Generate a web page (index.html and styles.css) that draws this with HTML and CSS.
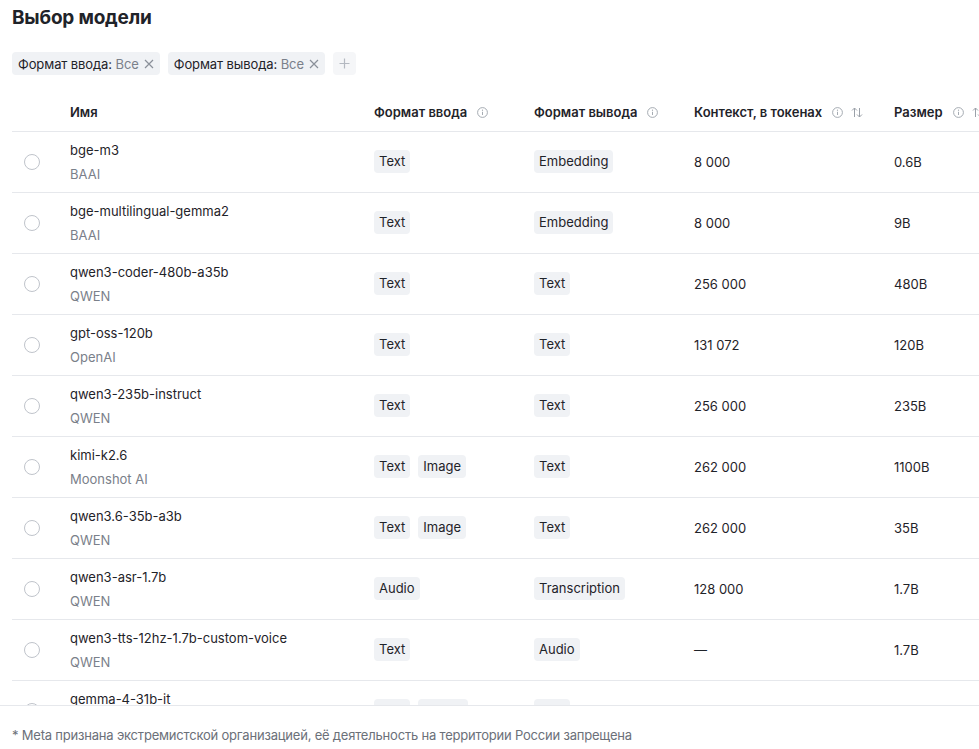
FILE: index.html
```html
<!DOCTYPE html>
<html lang="ru">
<head>
	<meta charset="utf-8">
	<title>Выбор модели</title>
	<link rel="stylesheet" href="styles.css">
</head>
<body>
	<div class="page">
		<h1 class="title">Выбор модели</h1>

		<!-- Filters -->
		<div class="filters">
			<span class="chip">Формат ввода: <span class="chip-value">Все</span>
				<svg class="chip-close" width="10" height="10" viewBox="0 0 10 10"><path d="M1 1L9 9M9 1L1 9" /></svg>
			</span>
			<span class="chip">Формат вывода: <span class="chip-value">Все</span>
				<svg class="chip-close" width="10" height="10" viewBox="0 0 10 10"><path d="M1 1L9 9M9 1L1 9" /></svg>
			</span>
			<button class="chip-add" type="button">
				<svg width="11" height="11" viewBox="0 0 11 11"><path d="M5.5 0.5V10.5M0.5 5.5H10.5" /></svg>
			</button>
		</div>

		<!-- Model table -->
		<div class="table-wrap">
			<table class="models">
				<colgroup>
					<col class="col-radio">
					<col class="col-name">
					<col class="col-in">
					<col class="col-out">
					<col class="col-ctx">
					<col class="col-size">
				</colgroup>
				<thead>
					<tr>
						<th></th>
						<th>Имя</th>
						<th><span class="th">Формат ввода <svg class="info" width="11" height="11" viewBox="0 0 11 11"><circle cx="5.5" cy="5.5" r="4.9" /><path d="M5.5 4.8V8" /><circle class="dot" cx="5.5" cy="3.2" r="0.6" /></svg></span></th>
						<th><span class="th">Формат вывода <svg class="info" width="11" height="11" viewBox="0 0 11 11"><circle cx="5.5" cy="5.5" r="4.9" /><path d="M5.5 4.8V8" /><circle class="dot" cx="5.5" cy="3.2" r="0.6" /></svg></span></th>
						<th><span class="th">Контекст, в токенах <svg class="info" width="11" height="11" viewBox="0 0 11 11"><circle cx="5.5" cy="5.5" r="4.9" /><path d="M5.5 4.8V8" /><circle class="dot" cx="5.5" cy="3.2" r="0.6" /></svg>
							<svg class="sort" width="12" height="11" viewBox="0 0 12 11"><path d="M3.5 10V1M1 3.5L3.5 1L6 3.5M8.5 1V10M6 7.5L8.5 10L11 7.5" /></svg></span></th>
						<th><span class="th">Размер <svg class="info" width="11" height="11" viewBox="0 0 11 11"><circle cx="5.5" cy="5.5" r="4.9" /><path d="M5.5 4.8V8" /><circle class="dot" cx="5.5" cy="3.2" r="0.6" /></svg>
							<svg class="sort" width="12" height="11" viewBox="0 0 12 11"><path d="M3.5 10V1M1 3.5L3.5 1L6 3.5M8.5 1V10M6 7.5L8.5 10L11 7.5" /></svg></span></th>
					</tr>
				</thead>
				<tbody>
					<tr>
						<td><span class="radio"></span></td>
						<td><div class="name">bge-m3</div><div class="vendor">BAAI</div></td>
						<td><span class="tag">Text</span></td>
						<td><span class="tag">Embedding</span></td>
						<td>8 000</td>
						<td>0.6B</td>
					</tr>
					<tr>
						<td><span class="radio"></span></td>
						<td><div class="name">bge-multilingual-gemma2</div><div class="vendor">BAAI</div></td>
						<td><span class="tag">Text</span></td>
						<td><span class="tag">Embedding</span></td>
						<td>8 000</td>
						<td>9B</td>
					</tr>
					<tr>
						<td><span class="radio"></span></td>
						<td><div class="name">qwen3-coder-480b-a35b</div><div class="vendor">QWEN</div></td>
						<td><span class="tag">Text</span></td>
						<td><span class="tag">Text</span></td>
						<td>256 000</td>
						<td>480B</td>
					</tr>
					<tr>
						<td><span class="radio"></span></td>
						<td><div class="name">gpt-oss-120b</div><div class="vendor">OpenAI</div></td>
						<td><span class="tag">Text</span></td>
						<td><span class="tag">Text</span></td>
						<td>131 072</td>
						<td>120B</td>
					</tr>
					<tr>
						<td><span class="radio"></span></td>
						<td><div class="name">qwen3-235b-instruct</div><div class="vendor">QWEN</div></td>
						<td><span class="tag">Text</span></td>
						<td><span class="tag">Text</span></td>
						<td>256 000</td>
						<td>235B</td>
					</tr>
					<tr>
						<td><span class="radio"></span></td>
						<td><div class="name">kimi-k2.6</div><div class="vendor">Moonshot AI</div></td>
						<td><span class="tag">Text</span><span class="tag">Image</span></td>
						<td><span class="tag">Text</span></td>
						<td>262 000</td>
						<td>1100B</td>
					</tr>
					<tr>
						<td><span class="radio"></span></td>
						<td><div class="name">qwen3.6-35b-a3b</div><div class="vendor">QWEN</div></td>
						<td><span class="tag">Text</span><span class="tag">Image</span></td>
						<td><span class="tag">Text</span></td>
						<td>262 000</td>
						<td>35B</td>
					</tr>
					<tr>
						<td><span class="radio"></span></td>
						<td><div class="name">qwen3-asr-1.7b</div><div class="vendor">QWEN</div></td>
						<td><span class="tag">Audio</span></td>
						<td><span class="tag">Transcription</span></td>
						<td>128 000</td>
						<td>1.7B</td>
					</tr>
					<tr>
						<td><span class="radio"></span></td>
						<td><div class="name">qwen3-tts-12hz-1.7b-custom-voice</div><div class="vendor">QWEN</div></td>
						<td><span class="tag">Text</span></td>
						<td><span class="tag">Audio</span></td>
						<td>—</td>
						<td>1.7B</td>
					</tr>
					<!-- next row, scrolled half out of view -->
					<tr>
						<td><span class="radio"></span></td>
						<td><div class="name">gemma-4-31b-it</div><div class="vendor">&nbsp;</div></td>
						<td><span class="tag tag-empty"></span><span class="tag tag-empty tag-wide"></span></td>
						<td><span class="tag tag-empty"></span></td>
						<td></td>
						<td></td>
					</tr>
				</tbody>
			</table>
		</div>
	</div>

	<footer class="note">* Meta признана экстремистской организацией, её деятельность на территории России запрещена</footer>
</body>
</html>
```

FILE: styles.css
```css
* {
	box-sizing: border-box;
}

body {
	margin: 0;
	height: 749px;
	overflow: hidden;
	display: flex;
	flex-direction: column;
	font-family: Inter, "Noto Sans", sans-serif;
	font-size: 13px;
	color: #1f2329;
	background: #fff;
}

.page {
	padding: 6px 0 0 12px;
}

.title {
	margin: 0;
	font-size: 19px;
	line-height: 24px;
	font-weight: 700;
	letter-spacing: -0.2px;
}

/* filter chips */
.filters {
	display: flex;
	gap: 8px;
	margin-top: 22px;
}

.chip {
	display: inline-flex;
	align-items: center;
	height: 23px;
	padding: 0 6px;
	background: #f0f2f5;
	border-radius: 4px;
	font-size: 13px;
	letter-spacing: -0.1px;
	white-space: pre;
}

.chip-value {
	color: #7a808a;
}

.chip-close {
	margin-left: 5px;
	fill: none;
	stroke: #8a9099;
	stroke-width: 1.2;
}

.chip-add {
	width: 23px;
	height: 23px;
	padding: 0;
	border: none;
	border-radius: 4px;
	background: #f5f6f8;
	display: flex;
	align-items: center;
	justify-content: center;
}

.chip-add svg {
	fill: none;
	stroke: #b4b9c1;
	stroke-width: 1.2;
}

/* table */
.table-wrap {
	margin-top: 17px;
	height: 613px;
	overflow: hidden;
}

.models {
	table-layout: fixed;
	width: 1100px;
	border-collapse: collapse;
}

.col-radio { width: 46px; }
.col-name { width: 304px; }
.col-in { width: 160px; }
.col-out { width: 160px; }
.col-ctx { width: 200px; }
.col-size { width: 230px; }

.models th,
.models td {
	padding: 0 12px;
	text-align: left;
	border-bottom: 1px solid #e6e8ec;
	vertical-align: middle;
	white-space: nowrap;
}

.models th {
	height: 39px;
	padding-top: 2px;
	font-weight: 600;
}

.models td {
	height: 61px;
}

.th {
	display: inline-flex;
	align-items: center;
}

.info {
	margin-left: 10px;
	fill: none;
	stroke: #9ba1a9;
	stroke-width: 0.9;
}

.info .dot {
	fill: #9ba1a9;
	stroke: none;
}

.sort {
	margin-left: 8px;
	fill: none;
	stroke: #9ba1a9;
	stroke-width: 1;
}

.radio {
	display: block;
	width: 16px;
	height: 16px;
	border: 1.5px solid #c0c4cb;
	border-radius: 50%;
}

.name {
	line-height: 20px;
}

.vendor {
	margin-top: 4px;
	line-height: 20px;
	color: #7a808a;
}

.tag {
	display: inline-block;
	height: 23px;
	line-height: 23px;
	padding: 0 5px;
	margin-right: 8px;
	background: #f0f2f5;
	border-radius: 4px;
	vertical-align: middle;
}

.tag-empty {
	width: 36px;
}

.tag-empty.tag-wide {
	width: 50px;
}

/* footnote under the table */
.note {
	border-top: 1px solid #e6e8ec;
	padding: 20px 12px 0;
	line-height: 18px;
	color: #6b7079;
	letter-spacing: -0.2px;
}
```
